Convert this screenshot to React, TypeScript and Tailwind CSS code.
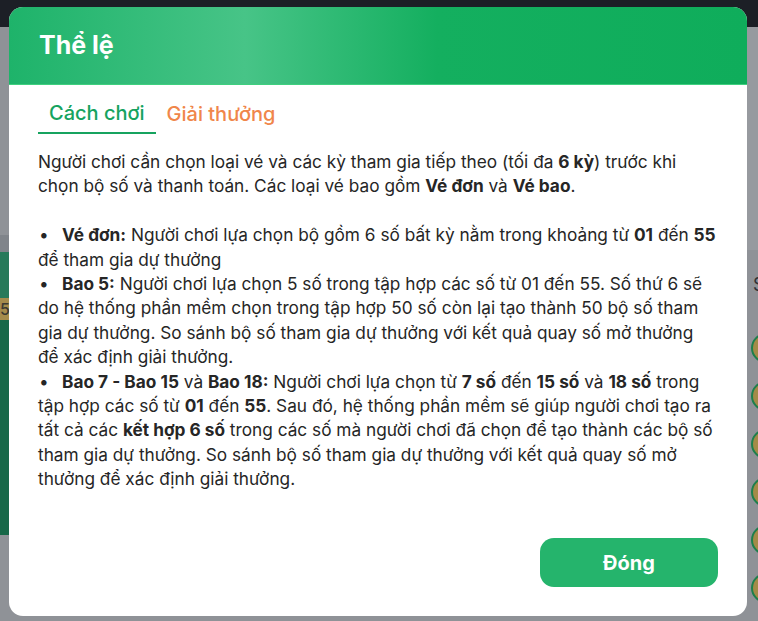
import React from "react";

const circles = [0, 1, 2, 3, 4, 5];

const Bullet = () => (
  <span className="inline-block w-[24px] pl-[1px]">•</span>
);

export default function App() {
  return (
    <div className="relative h-[621px] w-[758px] overflow-hidden bg-[#8f9297] font-['Inter',sans-serif]">
      {/* dimmed page behind the dialog */}
      <div className="h-[27px] bg-[#1c1f26]" />
      <div className="flex justify-between">
        <div className="w-[40px] pt-[208px]">
          <div className="h-[17px] bg-[#80848a]" />
          <div className="h-[46px] bg-[#277a5a]" />
          <div className="h-[22px] bg-[#a58c4c] pr-[31px] text-right text-[16px] font-medium leading-[22px] text-[#3b3a33]">
            55
          </div>
          <div className="h-[215px] bg-[#176848]" />
        </div>
        <div className="w-[11px] overflow-hidden">
          <div className="h-[223px] bg-[#979a9f]" />
          <div className="mt-[24px] h-[22px] pl-[6px] text-[18px] leading-[22px] text-[#2f3135]">
            S
          </div>
          <div className="mt-[37px] flex flex-col gap-[18px] pl-[4px]">
            {circles.map((c) => (
              <div
                key={c}
                className="h-[30px] w-[30px] shrink-0 rounded-full border-2 border-[#1d7f4c] bg-[#a38b48]"
              />
            ))}
          </div>
        </div>
      </div>

      {/* dialog */}
      <div className="absolute left-[9px] top-[7px] flex h-[609px] w-[738px] flex-col overflow-hidden rounded-[14px] bg-white">
        <div className="flex h-[78px] items-center border-b border-[#3fd07f] bg-[linear-gradient(90deg,#1eb36a_0%,#47c487_32%,#14af5f_58%,#0fad5b_100%)] px-[30px]">
          <h2 className="text-[25px] font-bold text-white">Thể lệ</h2>
        </div>

        <div className="flex flex-1 flex-col px-[29px] pb-[29px] pt-[14px]">
          <div className="flex">
            <button className="border-b-2 border-[#16a35f] px-[11px] pb-[5px] text-[20px] font-medium leading-[28px] text-[#16a35f]">
              Cách chơi
            </button>
            <button className="px-[11px] pb-[5px] text-[20px] font-medium leading-[28px] text-[#f0864a]">
              Giải thưởng
            </button>
          </div>

          <div className="mt-[16px] text-[17.25px] leading-[24.4px] text-[#262626]">
            <p>
              Người chơi cần chọn loại vé và các kỳ tham gia tiếp theo (tối đa{" "}
              <b>6 kỳ</b>) trước khi chọn bộ số và thanh toán. Các loại vé bao gồm{" "}
              <b>Vé đơn</b> và <b>Vé bao</b>.
            </p>
            <ul className="mt-[24.4px]">
              <li>
                <Bullet />
                <b>Vé đơn:</b> Người chơi lựa chọn bộ gồm 6 số bất kỳ nằm trong khoảng từ{" "}
                <b>01</b> đến <b>55</b> để tham gia dự thưởng
              </li>
              <li>
                <Bullet />
                <b>Bao 5:</b> Người chơi lựa chọn 5 số trong tập hợp các số từ 01 đến 55. Số thứ 6 sẽ
                do hệ thống phần mềm chọn trong tập hợp 50 số còn lại tạo thành 50 bộ số tham gia dự
                thưởng. So sánh bộ số tham gia dự thưởng với kết quả quay số mở thưởng để xác định giải
                thưởng.
              </li>
              <li>
                <Bullet />
                <b>Bao 7 - Bao 15</b> và <b>Bao 18:</b> Người chơi lựa chọn từ <b>7 số</b> đến{" "}
                <b>15 số</b> và <b>18 số</b> trong tập hợp các số từ <b>01</b> đến <b>55</b>. Sau
                đó, hệ thống phần mềm sẽ giúp người chơi tạo ra tất cả các <b>kết hợp 6 số</b> trong
                các số mà người chơi đã chọn để tạo thành các bộ số tham gia dự thưởng. So sánh bộ số
                tham gia dự thưởng với kết quả quay số mở thưởng để xác định giải thưởng.
              </li>
            </ul>
          </div>

          <div className="mt-auto flex justify-end">
            <button className="h-[49px] w-[178px] rounded-[14px] bg-[#25b46c] text-[20px] font-bold text-white">
              Đóng
            </button>
          </div>
        </div>
      </div>
    </div>
  );
}
